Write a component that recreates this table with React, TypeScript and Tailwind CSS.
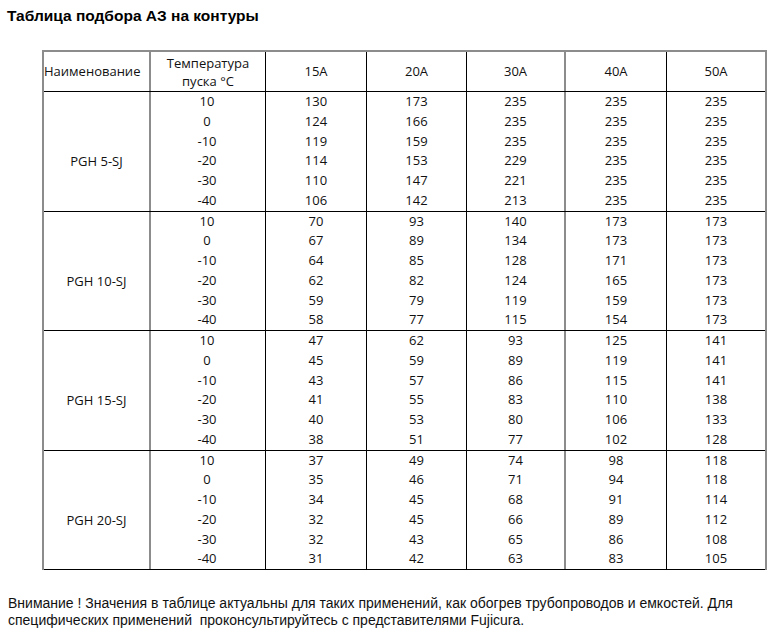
const cols = ['15A', '20A', '30A', '40A', '50A']
const temps = ['10', '0', '-10', '-20', '-30', '-40']

const groups = [
  {
    name: 'PGH 5-SJ',
    rows: [
      [130, 173, 235, 235, 235],
      [124, 166, 235, 235, 235],
      [119, 159, 235, 235, 235],
      [114, 153, 229, 235, 235],
      [110, 147, 221, 235, 235],
      [106, 142, 213, 235, 235],
    ],
  },
  {
    name: 'PGH 10-SJ',
    rows: [
      [70, 93, 140, 173, 173],
      [67, 89, 134, 173, 173],
      [64, 85, 128, 171, 173],
      [62, 82, 124, 165, 173],
      [59, 79, 119, 159, 173],
      [58, 77, 115, 154, 173],
    ],
  },
  {
    name: 'PGH 15-SJ',
    rows: [
      [47, 62, 93, 125, 141],
      [45, 59, 89, 119, 141],
      [43, 57, 86, 115, 141],
      [41, 55, 83, 110, 138],
      [40, 53, 80, 106, 133],
      [38, 51, 77, 102, 128],
    ],
  },
  {
    name: 'PGH 20-SJ',
    rows: [
      [37, 49, 74, 98, 118],
      [35, 46, 71, 94, 118],
      [34, 45, 68, 91, 114],
      [32, 45, 66, 89, 112],
      [32, 43, 65, 86, 108],
      [31, 42, 63, 83, 105],
    ],
  },
]

// borders between columns: gray ones are a bit heavier in the original
const colCls = [
  'w-[101px] border-r border-black',
  'w-[100px] border-r border-black',
  'w-[99px] border-r-2 border-[#8c8c8c]',
  'w-[101px] border-r border-black',
  'w-[98px]',
]

function Group({ name, rows }: { name: string; rows: number[][] }) {
  return (
    <div className="flex h-[118.5px] box-content border-b border-black">
      <div className="w-[107px] border-r-2 border-[#8c8c8c] flex justify-center pt-[59px]">
        <span className="leading-5">{name}</span>
      </div>
      <div className="w-[115px] border-r border-black flex flex-col items-center">
        {temps.map((t) => (
          <div key={t} className="h-[19.75px] leading-[19.75px] pr-[2px]">{t}</div>
        ))}
      </div>
      {colCls.map((c, ci) => (
        <div key={ci} className={`${c} flex flex-col items-center`}>
          {rows.map((r, ri) => (
            <div key={ri} className="h-[19.75px] leading-[19.75px]">{r[ci]}</div>
          ))}
        </div>
      ))}
    </div>
  )
}

export default function App() {
  return (
    <div className="w-[783px] h-[641px] bg-white font-['Liberation_Sans',Arial,sans-serif] text-black">
      <h1 className="pt-[5px] pl-[7px] text-[15.5px] font-bold leading-[22px]">
        Таблица подбора АЗ на контуры
      </h1>

      <div className="ml-[42px] mt-[23px] w-[725px] border-l-2 border-r-2 border-t-2 border-[#8c8c8c] font-['Open_Sans',sans-serif] text-[13px] text-[#111]">
        <div className="flex h-[39px] box-content border-b border-black">
          <div className="w-[107px] border-r-2 border-[#8c8c8c] flex items-center">
            <span>Наименование</span>
          </div>
          <div className="w-[115px] border-r border-black flex flex-col items-center justify-center leading-[18px]">
            <span>Температура</span>
            <span>пуска °C</span>
          </div>
          {cols.map((c, ci) => (
            <div key={c} className={`${colCls[ci]} flex items-center justify-center`}>
              {c}
            </div>
          ))}
        </div>
        {groups.map((g) => (
          <Group key={g.name} name={g.name} rows={g.rows} />
        ))}
      </div>

      <p className="mt-[25px] pl-[8px] text-[14px] leading-[16.5px] text-[#111]">
        Внимание ! Значения в таблице актуальны для таких применений, как обогрев трубопроводов и емкостей. Для
        <br />
        специфических применений&nbsp; проконсультируйтесь с представителями Fujicura.
      </p>
    </div>
  )
}
